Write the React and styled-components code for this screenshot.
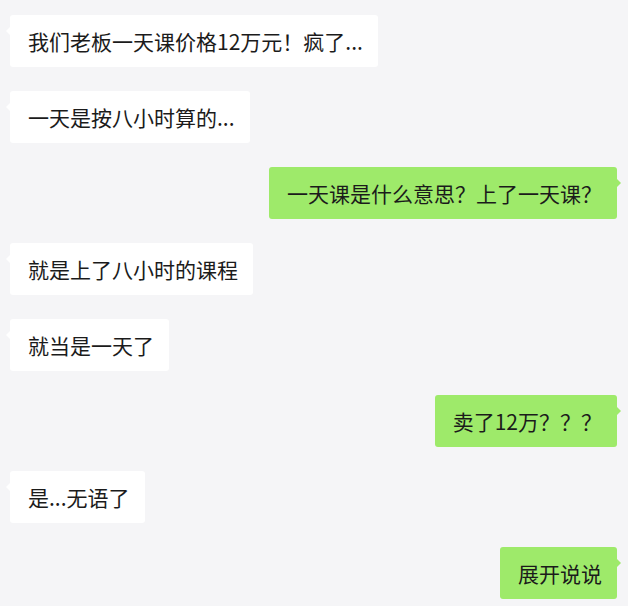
import React from "react";
import styled, { createGlobalStyle } from "styled-components";

const GlobalStyle = createGlobalStyle`
  html, body {
    margin: 0;
    padding: 0;
    background: #f5f5f7;
  }
`;

const ChatComponent = styled.main`
  width: 628px;
  min-height: 606px;
  box-sizing: border-box;
  padding: 15px 11px 8px 10px;
  background: #f5f5f7;
  display: flex;
  flex-direction: column;
  gap: 24px;
  font-family: "Noto Sans CJK SC", "Noto Sans", sans-serif;
`;

const RowComponent = styled.div`
  display: flex;
  justify-content: ${(props) => (props.mine ? "flex-end" : "flex-start")};
`;

const BubbleComponent = styled.div`
  position: relative;
  box-sizing: border-box;
  height: 52px;
  padding: 0 15px 0 18px;
  display: flex;
  align-items: center;
  border-radius: 3px;
  background: ${(props) => (props.mine ? "#9eea6a" : "#ffffff")};
  color: #1b1b1b;
  font-size: 21px;
  line-height: 28px;
  white-space: nowrap;

  /* little tail pointing at the speaker */
  &::before {
    content: "";
    position: absolute;
    top: 12px;
    ${(props) => (props.mine ? "right: -4px;" : "left: -4px;")}
    border-top: 4px solid transparent;
    border-bottom: 4px solid transparent;
    ${(props) =>
      props.mine
        ? "border-left: 4px solid #9eea6a;"
        : "border-right: 4px solid #ffffff;"}
  }
`;

const messages = [
  { text: "我们老板一天课价格12万元！疯了...", mine: false },
  { text: "一天是按八小时算的...", mine: false },
  { text: "一天课是什么意思？上了一天课？", mine: true },
  { text: "就是上了八小时的课程", mine: false },
  { text: "就当是一天了", mine: false },
  { text: "卖了12万？？？", mine: true },
  { text: "是...无语了", mine: false },
  { text: "展开说说", mine: true },
];

export default class App extends React.Component {
  render() {
    return (
      <>
        <GlobalStyle />
        <ChatComponent>
          {messages.map((msg, key) => (
            <RowComponent key={key} mine={msg.mine}>
              <BubbleComponent mine={msg.mine}>{msg.text}</BubbleComponent>
            </RowComponent>
          ))}
        </ChatComponent>
      </>
    );
  }
}
